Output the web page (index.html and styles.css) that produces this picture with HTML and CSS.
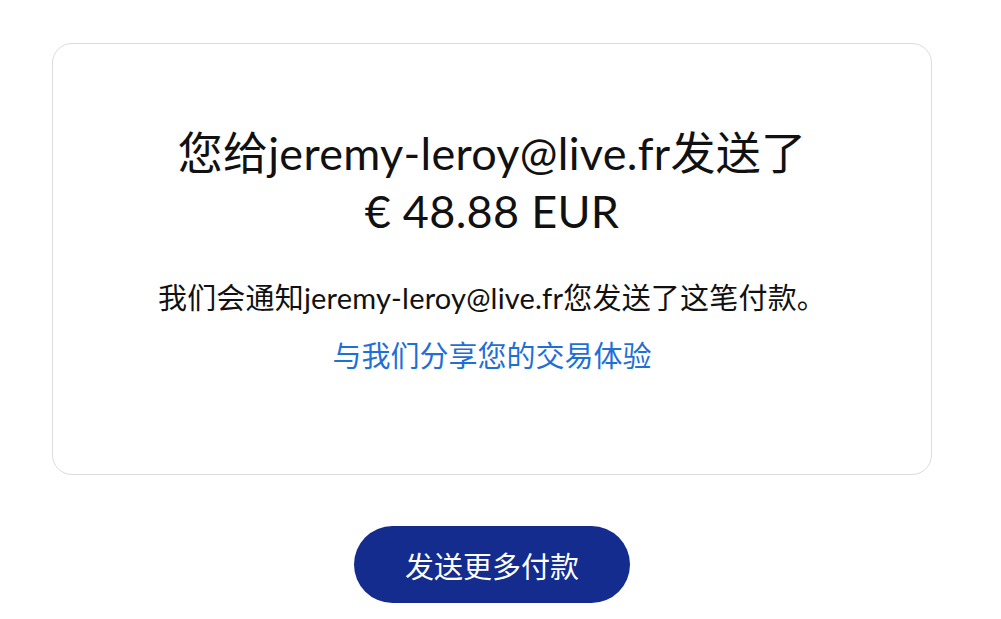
FILE: index.html
```html
<!DOCTYPE html>
<html lang="zh-CN">
<head>
    <meta charset="UTF-8">
    <meta name="viewport" content="width=device-width, initial-scale=1.0">
    <title>付款已发送</title>
    <link rel="stylesheet" href="styles.css">
</head>
<body>
    <div class="page">
        <div class="card">
            <h1 class="title">您给jeremy-leroy@live.fr发送了<br>€ 48.88 EUR</h1>
            <p class="notice">我们会通知jeremy-leroy@live.fr您发送了这笔付款。</p>
            <a class="feedback" href="#">与我们分享您的交易体验</a>
        </div>
        <div class="actions">
            <button class="send-more">发送更多付款</button>
        </div>
    </div>
</body>
</html>
```

FILE: styles.css
```css
body {
    margin: 0;
    background: #FFFFFF;
    color: #111111;
    font-family: Lato, "Noto Sans CJK SC", sans-serif;
}

.page {
    width: 984px;
    padding: 43px 52px 0;
    box-sizing: border-box;
}

.card {
    border: 1px solid #DCDCDC;
    border-radius: 20px;
    padding: 80px 20px 98px;
    text-align: center;
}

.title {
    margin: 0;
    font-size: 45px;
    font-weight: 400;
    line-height: 58px;
    letter-spacing: 0.3px;
}

.notice {
    margin: 38px 0 0;
    font-size: 29px;
    line-height: 40px;
    letter-spacing: 0.2px;
}

.feedback {
    display: inline-block;
    margin-top: 18px;
    font-size: 29px;
    line-height: 40px;
    color: #1F6FD8;
    text-decoration: none;
}

.actions {
    display: flex;
    justify-content: center;
    margin-top: 51px;
}

.send-more {
    width: 276px;
    height: 77px;
    border: none;
    border-radius: 39px;
    background-color: #142C8E;
    color: #FFFFFF;
    font-family: Lato, "Noto Sans CJK SC", sans-serif;
    font-size: 29px;
    cursor: pointer;
}
```
